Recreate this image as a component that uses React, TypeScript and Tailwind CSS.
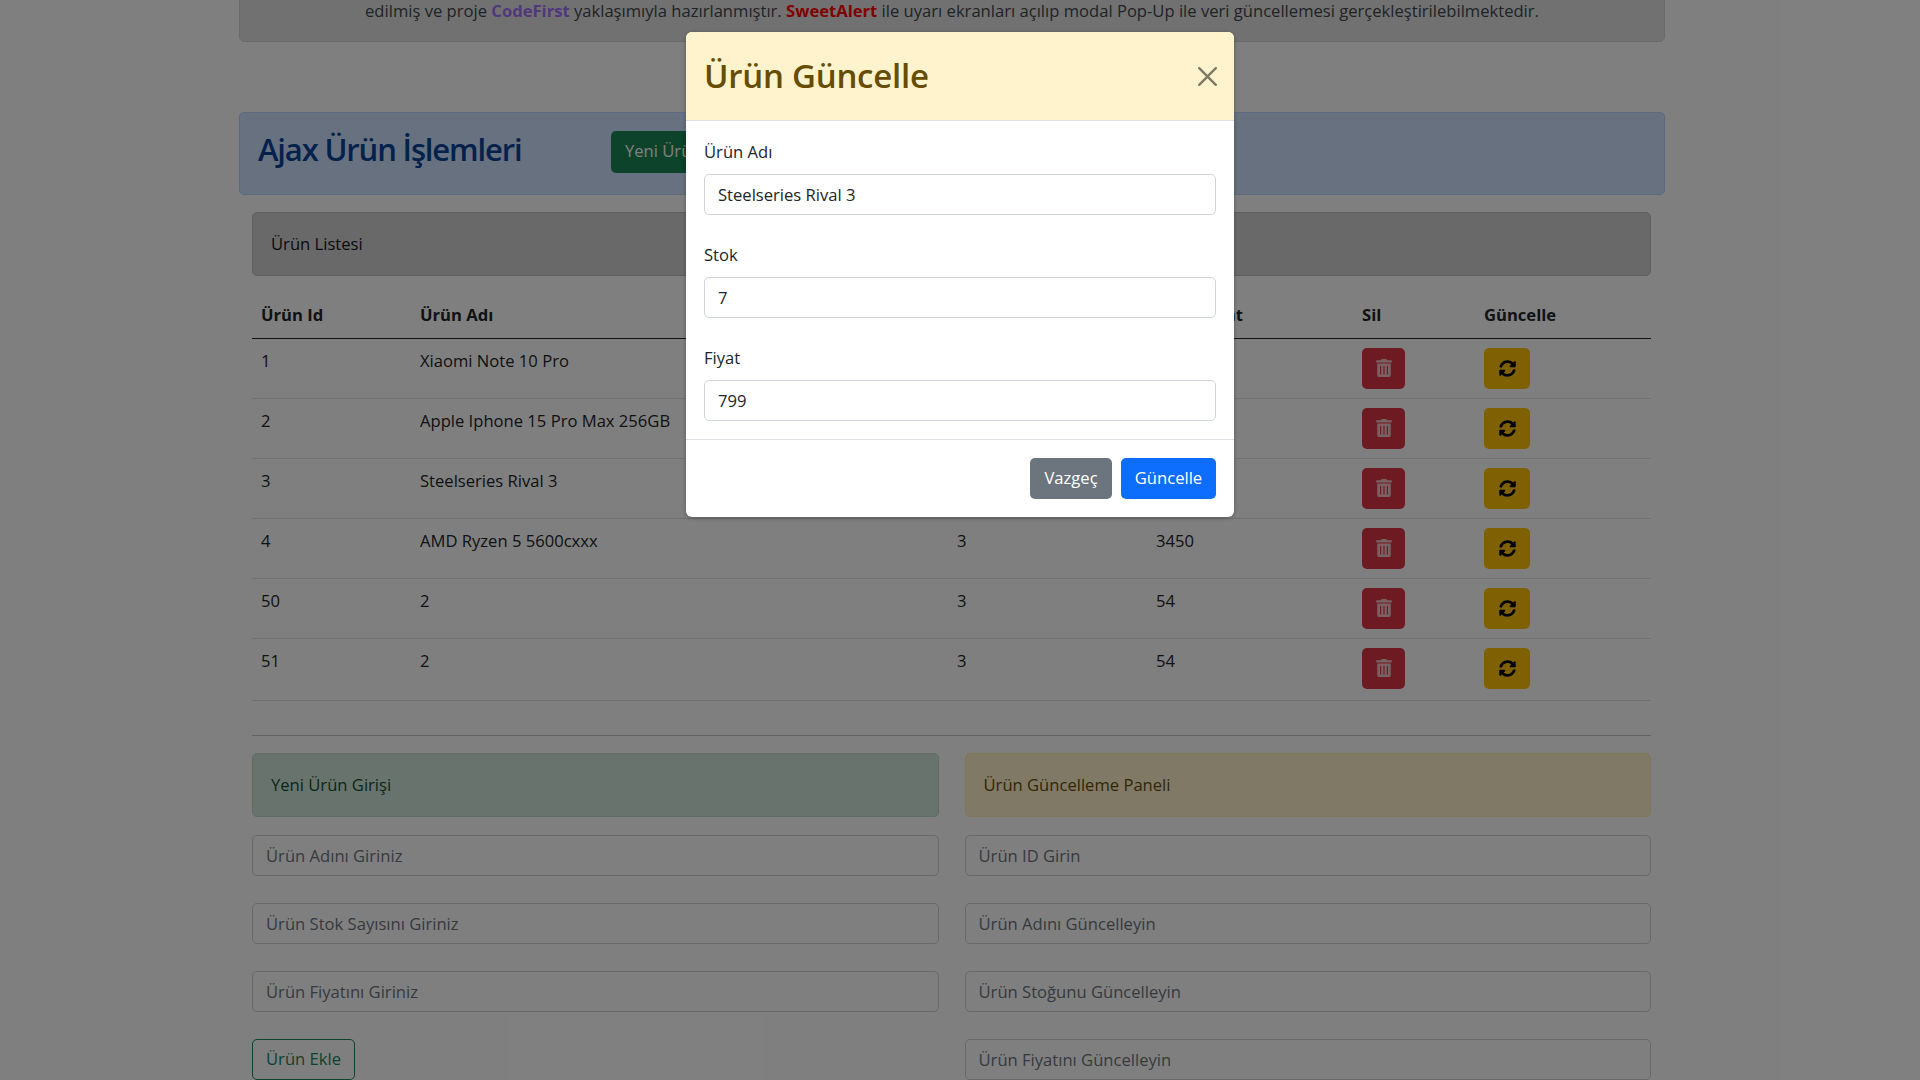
import { FaTrashAlt, FaSyncAlt } from "react-icons/fa";

const rows = [
  ["1", "Xiaomi Note 10 Pro", "12", "899"],
  ["2", "Apple Iphone 15 Pro Max 256GB", "5", "1299"],
  ["3", "Steelseries Rival 3", "7", "799"],
  ["4", "AMD Ryzen 5 5600cxxx", "3", "3450"],
  ["50", "2", "3", "54"],
  ["51", "2", "3", "54"],
];

function Field({ placeholder }: { placeholder: string }) {
  return (
    <input
      readOnly
      placeholder={placeholder}
      className="block w-full h-[41px] px-[13px] bg-white border border-[#ced4da] rounded-[5px] text-[16.6px] text-[#212529] placeholder:text-[#6c757d] outline-none"
    />
  );
}

function ModalField({ label, value }: { label: string; value: string }) {
  return (
    <div>
      <label className="block h-[24px] leading-[24px] mb-[10px] text-[#212529]">{label}</label>
      <input
        readOnly
        value={value}
        className="block w-full h-[41px] px-[13px] bg-white border border-[#ced4da] rounded-[5px] text-[16.6px] text-[#212529] outline-none"
      />
    </div>
  );
}

export default function App() {
  return (
    <div className="relative h-[1080px] w-[1920px] overflow-hidden bg-white text-[16.6px] text-[#212529] font-['Open_Sans','Noto_Sans',sans-serif]">
      <div className="w-[1904px]">
        <div className="mx-auto w-[1426px] -mt-[40px]">
          <div className="h-[82px] flex items-end justify-center pb-[18px] bg-[#e2e3e5] border border-[#d3d6d8] rounded-[5px] text-[#41464b]">
            <p className="leading-[24px] whitespace-nowrap">
              edilmiş ve proje <b className="text-[#a370f7]">CodeFirst</b> yaklaşımıyla hazırlanmıştır.{" "}
              <b className="text-[#ff0000]">SweetAlert</b> ile uyarı ekranları açılıp modal Pop-Up ile veri güncellemesi gerçekleştirilebilmektedir.
            </p>
          </div>

          <div className="mt-[70px] h-[83px] flex items-center pl-[18px] bg-[#cfe2ff] border border-[#b6d4fe] rounded-[5px]">
            <h2 className="w-[353px] text-[31px] leading-[38px] font-semibold tracking-[-1.15px] text-[#084298] -mt-[9px]">Ajax Ürün İşlemleri</h2>
            <button className="h-[42px] -mt-[4px] px-[14px] bg-[#198754] text-white rounded-[5px]">Yeni Ürün Ekle</button>
          </div>

          <div className="ml-[13px] mr-[14px] mt-[17px]">
            <div className="h-[64px] flex items-center pl-[18px] bg-[#d3d3d4] border border-[#bcbebf] rounded-[5px] text-[#141619]">
              Ürün Listesi
            </div>

            <table className="mt-[16px] w-full table-fixed border-collapse">
              <colgroup>
                <col className="w-[159px]" />
                <col className="w-[537px]" />
                <col className="w-[199px]" />
                <col className="w-[206px]" />
                <col className="w-[122px]" />
                <col />
              </colgroup>
              <thead>
                <tr className="h-[46px] border-b border-[#212529] text-left">
                  {["Ürün Id", "Ürün Adı", "Ürün Stok", "Ürün Fiyat", "Sil", "Güncelle"].map((h) => (
                    <th key={h} className="pl-[9px] font-bold align-middle pt-[1px] whitespace-nowrap">{h}</th>
                  ))}
                </tr>
              </thead>
              <tbody>
                {rows.map((r, i) => (
                  <tr key={r[0]} className={`border-b border-[#dee2e6] ${i === 5 ? "h-[62px]" : "h-[60px]"}`}>
                    {r.map((c, j) => (
                      <td key={j} className="pl-[9px] align-top pt-[10px] leading-[24px]">{c}</td>
                    ))}
                    <td className="pl-[9px] align-top pt-[9px]">
                      <button className="flex items-center justify-center w-[43px] h-[41px] bg-[#dc3545] rounded-[5px] text-[#ffffff]/70">
                        <FaTrashAlt className="w-[16px] h-[18px]" />
                      </button>
                    </td>
                    <td className="pl-[9px] align-top pt-[9px]">
                      <button className="flex items-center justify-center w-[46px] h-[41px] bg-[#ffc107] rounded-[5px] text-black">
                        <FaSyncAlt className="w-[17px] h-[17px]" />
                      </button>
                    </td>
                  </tr>
                ))}
              </tbody>
            </table>

            <hr className="mt-[34px] border-0 border-t border-[#c8c8c8]" />

            <div className="mt-[17px] grid grid-cols-2 gap-x-[26px]">
              <div className="flex flex-col gap-[27px]">
                <div className="-mb-[9px] h-[64px] flex items-center pl-[18px] pt-[2px] bg-[#d1e7dd] border border-[#badbcc] rounded-[5px] text-[#0f5132]">
                  Yeni Ürün Girişi
                </div>
                <Field placeholder="Ürün Adını Giriniz" />
                <Field placeholder="Ürün Stok Sayısını Giriniz" />
                <Field placeholder="Ürün Fiyatını Giriniz" />
                <button className="self-start h-[41px] w-[103px] border border-[#198754] rounded-[5px] text-[#198754]">Ürün Ekle</button>
              </div>
              <div className="flex flex-col gap-[27px]">
                <div className="-mb-[9px] h-[64px] flex items-center pl-[18px] pt-[2px] bg-[#fff3cd] border border-[#ffecb5] rounded-[5px] text-[#664d03]">
                  Ürün Güncelleme Paneli
                </div>
                <Field placeholder="Ürün ID Girin" />
                <Field placeholder="Ürün Adını Güncelleyin" />
                <Field placeholder="Ürün Stoğunu Güncelleyin" />
                <Field placeholder="Ürün Fiyatını Güncelleyin" />
              </div>
            </div>
          </div>
        </div>
      </div>

      <div className="absolute inset-0 bg-black/50" />

      <div className="absolute top-[32px] left-[686px] w-[548px] h-[485px] flex flex-col bg-white rounded-[6px] overflow-hidden shadow-[0_1px_4px_rgba(0,0,0,0.3)]">
        <div className="h-[89px] shrink-0 flex items-center justify-between pl-[18px] pr-[17px] bg-[#fff3cd] border-b border-[#dee2e6]">
          <h3 className="text-[33px] leading-[40px] font-semibold tracking-[-0.25px] text-[#664d03]">Ürün Güncelle</h3>
          <svg viewBox="0 0 16 16" className="w-[19px] h-[19px] text-[#7f7a68]" fill="currentColor">
            <path d="M.293.293a1 1 0 011.414 0L8 6.586 14.293.293a1 1 0 111.414 1.414L9.414 8l6.293 6.293a1 1 0 01-1.414 1.414L8 9.414l-6.293 6.293a1 1 0 01-1.414-1.414L6.586 8 .293 1.707a1 1 0 010-1.414z" />
          </svg>
        </div>
        <div className="h-[319px] shrink-0 px-[18px] pt-[19px] flex flex-col gap-[28px] border-b border-[#dee2e6]">
          <ModalField label="Ürün Adı" value="Steelseries Rival 3" />
          <ModalField label="Stok" value="7" />
          <ModalField label="Fiyat" value="799" />
        </div>
        <div className="flex-1 flex justify-end items-start gap-[9px] pt-[18px] pr-[18px]">
          <button className="w-[82px] h-[41px] bg-[#6c757d] text-white rounded-[5px]">Vazgeç</button>
          <button className="w-[95px] h-[41px] bg-[#0d6efd] text-white rounded-[5px]">Güncelle</button>
        </div>
      </div>
    </div>
  );
}
